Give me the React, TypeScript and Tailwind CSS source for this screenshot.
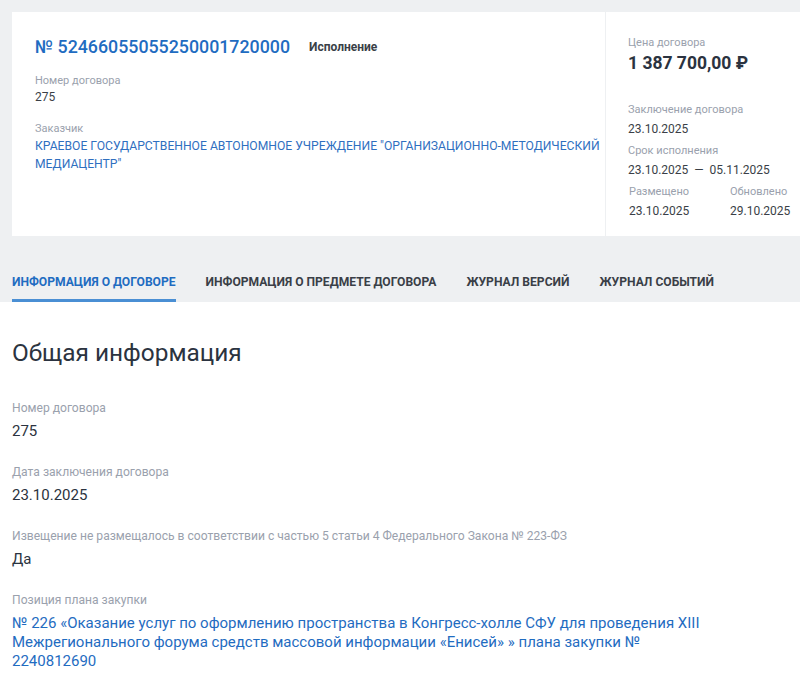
export default function App() {
  return (
    <div className="min-h-[686px] bg-white font-['Roboto','Liberation_Sans',sans-serif] text-[#2b3340]">
      <div className="bg-[#eef0f2] pt-3">
        <div className="ml-3 flex h-[224px] bg-white">
          <div className="flex-1 pl-[23px] pt-[23px]">
            <div className="flex items-center gap-[19px]">
              <span className="text-[17.8px] font-medium leading-6 text-[#1f6cc1]">№ 52466055055250001720000</span>
              <span className="text-[12px] font-bold text-[#3a3f47]">Исполнение</span>
            </div>
            <div className="mt-[14px] text-[11px] leading-4 text-[#9aa1ad]">Номер договора</div>
            <div className="text-[12px] leading-4 text-[#3a3f47]">275</div>
            <div className="mt-4 text-[11px] leading-4 text-[#9aa1ad]">Заказчик</div>
            <div className="text-[12.15px] leading-[18px] text-[#2f6fbf]">
              КРАЕВОЕ ГОСУДАРСТВЕННОЕ АВТОНОМНОЕ УЧРЕЖДЕНИЕ "ОРГАНИЗАЦИОННО-МЕТОДИЧЕСКИЙ МЕДИАЦЕНТР"
            </div>
          </div>
          <div className="w-[195px] border-l border-[#eef0f2] pl-[22px] pt-[23px]">
            <div className="text-[11px] leading-4 text-[#9aa1ad]">Цена договора</div>
            <div className="text-[17.5px] font-bold leading-6 text-[#2b3340]">1 387 700,00 ₽</div>
            <div className="mt-[27px] text-[11px] leading-4 text-[#9aa1ad]">Заключение договора</div>
            <div className="mt-[3px] text-[12px] leading-4 text-[#3a3f47]">23.10.2025</div>
            <div className="mt-[6px] text-[11px] leading-4 text-[#9aa1ad]">Срок исполнения</div>
            <div className="mt-[3px] text-[12px] leading-4 text-[#3a3f47]">23.10.2025 &nbsp;— &nbsp;05.11.2025</div>
            <div className="mt-[6px] flex">
              <div className="w-[102px] pl-px">
                <div className="text-[11px] leading-4 text-[#9aa1ad]">Размещено</div>
                <div className="mt-[3px] text-[12px] leading-4 text-[#3a3f47]">23.10.2025</div>
              </div>
              <div>
                <div className="text-[11px] leading-4 text-[#9aa1ad]">Обновлено</div>
                <div className="mt-[3px] text-[12px] leading-4 text-[#3a3f47]">29.10.2025</div>
              </div>
            </div>
          </div>
        </div>
        <div className="mt-[38px] flex gap-[30px] px-3 text-[12.1px] font-bold uppercase leading-4">
          <div className="border-b-[3px] border-[#4a8fd4] pb-[9px] text-[#1f6cc1]">Информация о договоре</div>
          <div className="text-[#3a3f47]">Информация о предмете договора</div>
          <div className="text-[#3a3f47]">Журнал версий</div>
          <div className="text-[#3a3f47]">Журнал событий</div>
        </div>
      </div>
      <div className="px-3 pt-[35px]">
        <h1 className="text-[24.4px] leading-8 text-[#2b3340]">Общая информация</h1>
        <div className="mt-[31px] text-[12.1px] leading-4 text-[#9aa1ad]">Номер договора</div>
        <div className="mt-[5px] text-[15px] leading-5">275</div>
        <div className="mt-[23px] text-[12.1px] leading-4 text-[#9aa1ad]">Дата заключения договора</div>
        <div className="mt-[5px] text-[15px] leading-5">23.10.2025</div>
        <div className="mt-[23px] text-[12.1px] leading-4 text-[#9aa1ad]">
          Извещение не размещалось в соответствии с частью 5 статьи 4 Федерального Закона № 223-ФЗ
        </div>
        <div className="mt-[5px] text-[15px] leading-5">Да</div>
        <div className="mt-[23px] text-[12.1px] leading-4 text-[#9aa1ad]">Позиция плана закупки</div>
        <div className="mt-[6px] max-w-[700px] text-[15px] leading-[19px] text-[#1f6cc1]">
          № 226 «Оказание услуг по оформлению пространства в Конгресс-холле СФУ для проведения XIII Межрегионального форума средств массовой информации «Енисей» » плана закупки № 2240812690
        </div>
      </div>
    </div>
  );
}
